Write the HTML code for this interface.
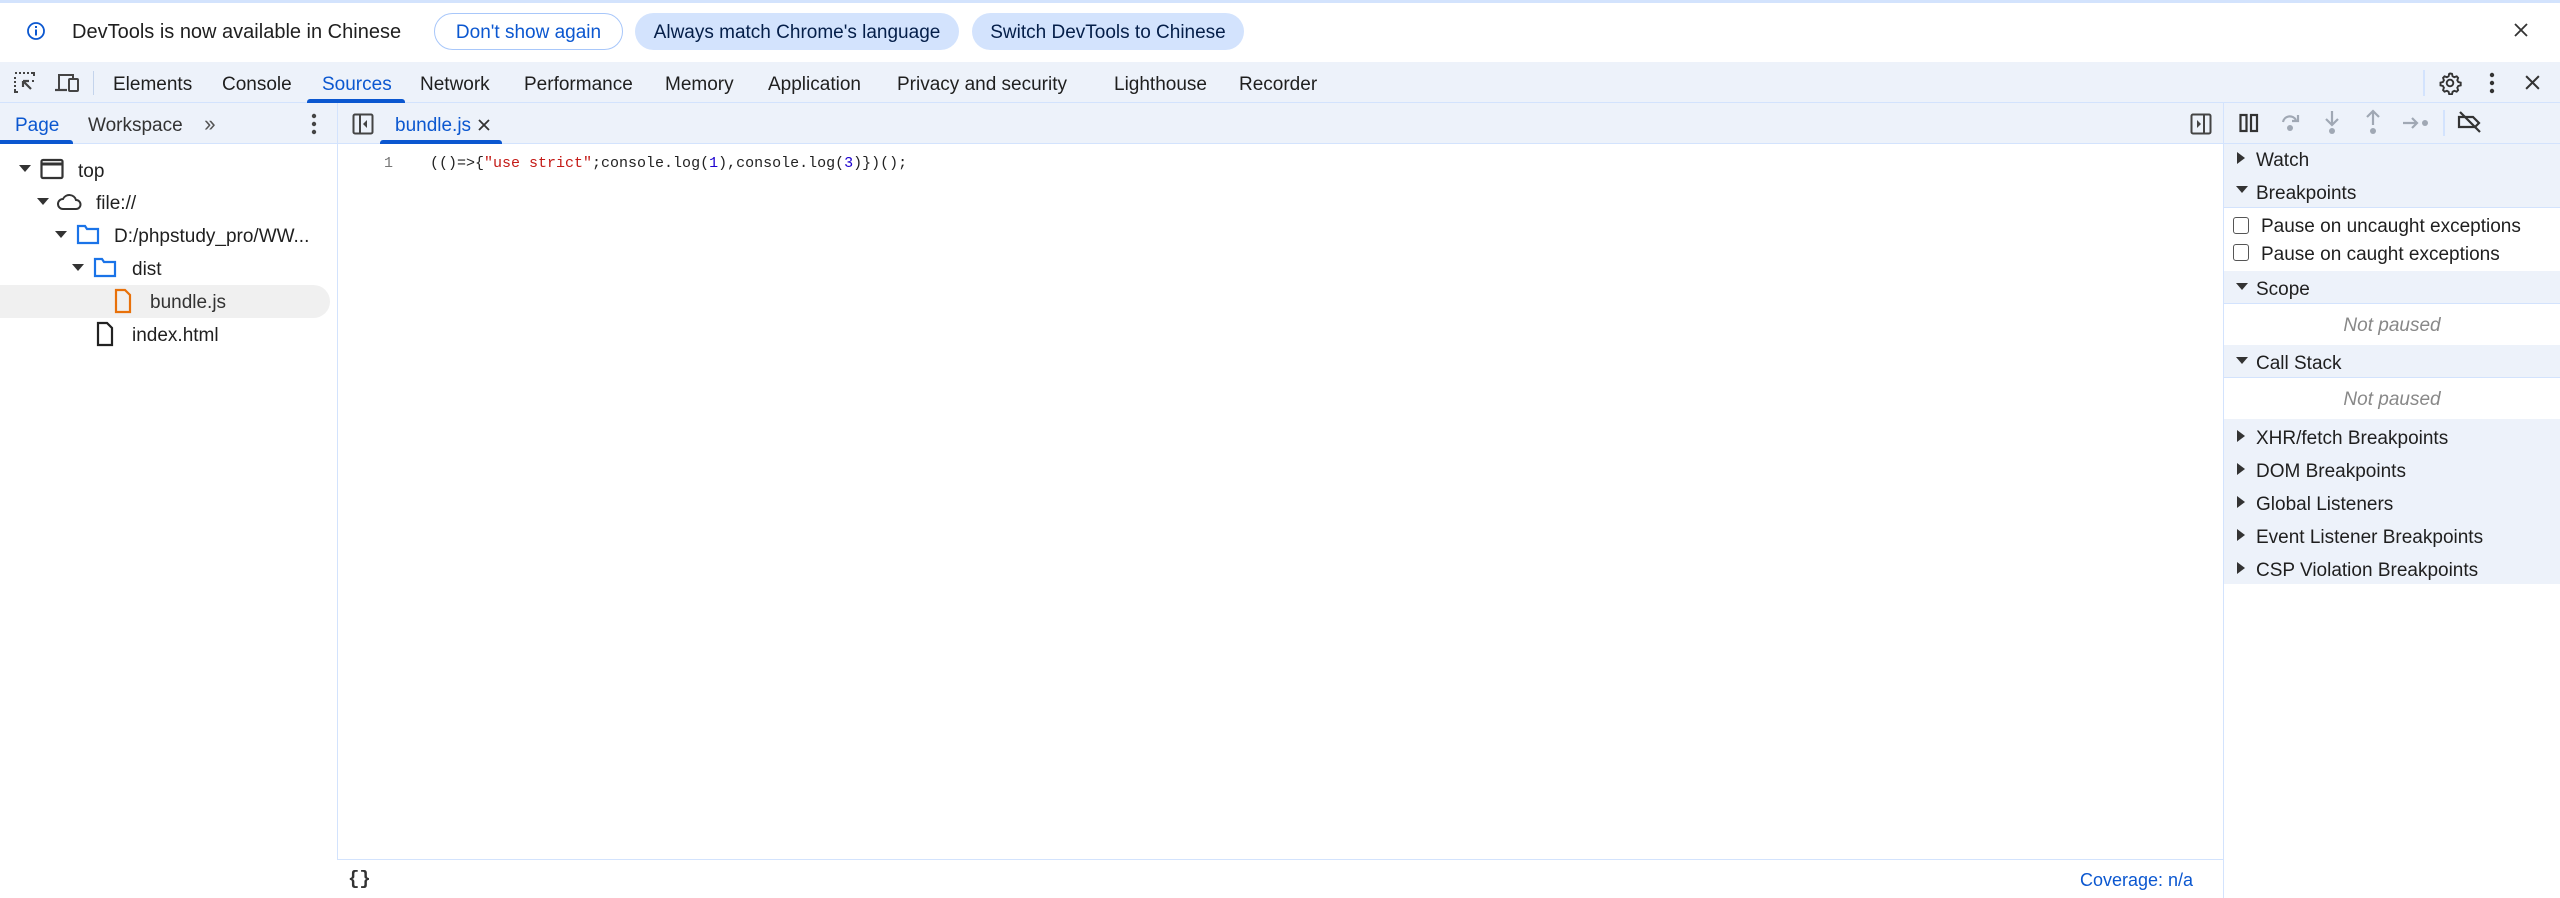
<!DOCTYPE html>
<html><head><meta charset="utf-8"><style>
*{box-sizing:border-box;margin:0;padding:0}
body{width:2560px;height:898px;overflow:hidden;background:#fff;font-family:"Liberation Sans",Arial,sans-serif;color:#1f1f1f;position:relative;font-size:19px}
.a{position:absolute;white-space:nowrap}
.t{margin-top:3px}
.tb{background:#edf2fa}
.blue{color:#0b57d0}
svg{position:absolute}
</style></head><body>
<!-- infobar -->
<div class="a" style="left:0;top:0;width:2560px;height:3px;background:#d3e3fd"></div>
<svg style="left:26px;top:21px" width="20" height="20" viewBox="0 0 20 20"><circle cx="10" cy="10" r="8" fill="none" stroke="#0b57d0" stroke-width="1.8"/><rect x="9" y="8.5" width="2" height="6" fill="#0b57d0"/><rect x="9" y="5" width="2" height="2" fill="#0b57d0"/></svg>
<div class="a" style="left:72px;top:21px;font-size:20px">DevTools is now available in Chinese</div>
<div class="a" style="left:434px;top:13px;width:189px;height:37px;border:1.5px solid #a8c7fa;border-radius:19px;color:#0b57d0;text-align:center;line-height:37px;font-size:19px">Don't show again</div>
<div class="a" style="left:635px;top:13px;width:324px;height:37px;background:#d3e3fd;border-radius:19px;text-align:center;line-height:40px;font-size:19px;color:#041e49">Always match Chrome's language</div>
<div class="a" style="left:972px;top:13px;width:272px;height:37px;background:#d3e3fd;border-radius:19px;text-align:center;line-height:40px;font-size:19px;color:#041e49">Switch DevTools to Chinese</div>
<svg style="left:2513px;top:22px" width="16" height="16" viewBox="0 0 16 16"><path d="M2 2L14 14M14 2L2 14" stroke="#333" stroke-width="1.8"/></svg>

<!-- main tab bar -->
<div class="a tb" style="left:0;top:62px;width:2560px;height:41px;border-bottom:1px solid #d3e3fd"></div>
<svg style="left:14px;top:72px" width="22" height="22" viewBox="0 0 22 22"><path d="M1 1h2M5 1h2M9 1h2M13 1h2M17 1h3v3M1 5v2M1 9v2M1 13v2M1 17v3h3M19 8v2" stroke="#444" stroke-width="2" fill="none"/><path d="M9 9L17 17M9 9h6M9 9v6" stroke="#444" stroke-width="2.2" fill="none"/></svg>
<svg style="left:54px;top:72px" width="26" height="22" viewBox="0 0 26 22"><path d="M5 17V3h14v3" stroke="#444" stroke-width="2" fill="none"/><path d="M1 18h12" stroke="#444" stroke-width="2.2"/><rect x="15" y="7" width="9" height="12" rx="1" fill="none" stroke="#444" stroke-width="2"/></svg>
<div class="a" style="left:93px;top:71px;width:1px;height:24px;background:#c4d4ec"></div>
<div class="a" style="top:74px;left:113px">Elements</div>
<div class="a" style="top:74px;left:222px">Console</div>
<div class="a blue" style="top:74px;left:322px">Sources</div>
<div class="a" style="left:307px;top:99px;width:98px;height:4px;background:#0b57d0;border-radius:3px 3px 0 0"></div>
<div class="a" style="top:74px;left:420px">Network</div>
<div class="a" style="top:74px;left:524px">Performance</div>
<div class="a" style="top:74px;left:665px">Memory</div>
<div class="a" style="top:74px;left:768px">Application</div>
<div class="a" style="top:74px;left:897px">Privacy and security</div>
<div class="a" style="top:74px;left:1114px">Lighthouse</div>
<div class="a" style="top:74px;left:1239px">Recorder</div>
<div class="a" style="left:2423px;top:70px;width:2px;height:26px;background:#d3e3fd"></div>
<svg style="left:2438px;top:71px" width="24" height="24" viewBox="0 0 24 24"><path d="M12 2.5l2 .3.6 2.4 1.7 1 2.4-.8 1.4 1.5-.8 2.4 1 1.7 2.4.6v2.8l-2.4.6-1 1.7.8 2.4-1.4 1.5-2.4-.8-1.700 1-.6 2.4h-2.8l-.6-2.4-1.7-1-2.4.8-1.4-1.5.8-2.4-1-1.7-2.4-.6v-2.8l2.4-.6 1-1.7-.8-2.4 1.4-1.5 2.4.8 1.7-1 .6-2.4z" fill="none" stroke="#333" stroke-width="1.9"/><circle cx="12" cy="12" r="3.3" fill="none" stroke="#333" stroke-width="1.9"/></svg>
<svg style="left:2489px;top:72px" width="6" height="22" viewBox="0 0 6 22"><circle cx="3" cy="3" r="2.2" fill="#333"/><circle cx="3" cy="11" r="2.2" fill="#333"/><circle cx="3" cy="19" r="2.2" fill="#333"/></svg>
<svg style="left:2524px;top:74px" width="17" height="17" viewBox="0 0 16 16"><path d="M2 2L14 14M14 2L2 14" stroke="#333" stroke-width="1.9"/></svg>

<!-- sub toolbar -->
<div class="a tb" style="left:0;top:103px;width:2560px;height:41px;border-bottom:1px solid #d3e3fd"></div>
<div class="a blue" style="left:15px;top:115px">Page</div>
<div class="a" style="left:0;top:140px;width:73px;height:4px;background:#0b57d0;border-radius:0 3px 0 0"></div>
<div class="a" style="left:88px;top:115px;color:#333">Workspace</div>
<div class="a" style="left:204px;top:111px;color:#555;font-size:22px;letter-spacing:-3px">››</div>
<svg style="left:311px;top:113px" width="6" height="22" viewBox="0 0 6 22"><circle cx="3" cy="3" r="2.2" fill="#444"/><circle cx="3" cy="11" r="2.2" fill="#444"/><circle cx="3" cy="19" r="2.2" fill="#444"/></svg>
<div class="a" style="left:337px;top:103px;width:1px;height:757px;background:#d3e3fd"></div>
<svg style="left:352px;top:113px" width="22" height="22" viewBox="0 0 22 22"><rect x="1.5" y="1.5" width="19" height="19" rx="1.5" fill="none" stroke="#444" stroke-width="2"/><path d="M8 2v18" stroke="#444" stroke-width="2"/><path d="M15 7l-4 4 4 4z" fill="#444"/></svg>
<div class="a blue" style="left:395px;top:115px">bundle.js</div>
<svg style="left:477px;top:118px" width="14" height="14" viewBox="0 0 14 14"><path d="M2 2L12 12M12 2L2 12" stroke="#333" stroke-width="1.8"/></svg>
<div class="a" style="left:380px;top:140px;width:122px;height:4px;background:#0b57d0;border-radius:3px 3px 0 0"></div>
<svg style="left:2190px;top:113px" width="22" height="22" viewBox="0 0 22 22"><rect x="1.5" y="1.5" width="19" height="19" rx="1.5" fill="none" stroke="#444" stroke-width="2"/><path d="M14 2v18" stroke="#444" stroke-width="2"/><path d="M7 7l4 4-4 4z" fill="#444"/></svg>
<div class="a" style="left:2223px;top:103px;width:1px;height:795px;background:#d3e3fd"></div>
<svg style="left:2239px;top:113px" width="20" height="20" viewBox="0 0 20 20"><rect x="1.5" y="2" width="6" height="16" fill="none" stroke="#333" stroke-width="2.2"/><rect x="12" y="2" width="6" height="16" fill="none" stroke="#333" stroke-width="2.2"/></svg>
<svg style="left:2280px;top:111px" width="22" height="24" viewBox="0 0 22 24"><path d="M3 11a7 7 0 0 1 13-2" fill="none" stroke="#a0a8b4" stroke-width="2.2"/><path d="M18 4v6h-6" fill="none" stroke="#a0a8b4" stroke-width="2.2"/><circle cx="10" cy="17" r="3" fill="#a0a8b4"/></svg>
<svg style="left:2322px;top:109px" width="20" height="28" viewBox="0 0 20 28"><path d="M10 2v14M4 10l6 6 6-6" fill="none" stroke="#a0a8b4" stroke-width="2.2"/><circle cx="10" cy="22" r="3" fill="#a0a8b4"/></svg>
<svg style="left:2363px;top:109px" width="20" height="28" viewBox="0 0 20 28"><path d="M10 16V2M4 8l6-6 6 6" fill="none" stroke="#a0a8b4" stroke-width="2.2"/><circle cx="10" cy="22" r="3" fill="#a0a8b4"/></svg>
<svg style="left:2402px;top:114px" width="28" height="18" viewBox="0 0 28 18"><path d="M1 9h14M10 4l5 5-5 5" fill="none" stroke="#a0a8b4" stroke-width="2.2"/><circle cx="23" cy="9" r="3" fill="#a0a8b4"/></svg>
<div class="a" style="left:2443px;top:110px;width:2px;height:26px;background:#d3e3fd"></div>
<svg style="left:2457px;top:111px" width="26" height="22" viewBox="0 0 26 22"><path d="M2 6h14l6 6-4 4H2z" fill="none" stroke="#333" stroke-width="2.2"/><path d="M3 1l20 20" stroke="#333" stroke-width="2.2"/></svg>

<!-- file tree -->
<div class="a" style="left:0;top:285px;width:330px;height:33px;background:#f0f0f0;border-radius:0 17px 17px 0"></div>
<svg style="left:19px;top:165px" width="12" height="8"><path d="M0 0h12L6 7z" fill="#333"/></svg>
<svg style="left:40px;top:158px" width="24" height="22" viewBox="0 0 24 22"><rect x="1.5" y="2" width="21" height="18" rx="1.5" fill="none" stroke="#333" stroke-width="2.2"/><path d="M2 6h20" stroke="#333" stroke-width="3"/></svg>
<div class="a" style="left:78px;top:161px">top</div>
<svg style="left:37px;top:198px" width="12" height="8"><path d="M0 0h12L6 7z" fill="#333"/></svg>
<svg style="left:57px;top:190px" width="26" height="22" viewBox="0 0 26 22"><path d="M6 19a5 5 0 0 1 0-10a7 7 0 0 1 13 1a4.5 4.5 0 0 1 0 9z" fill="none" stroke="#333" stroke-width="2"/></svg>
<div class="a" style="left:96px;top:193px">file://</div>
<svg style="left:55px;top:231px" width="12" height="8"><path d="M0 0h12L6 7z" fill="#333"/></svg>
<svg style="left:76px;top:223px" width="24" height="22" viewBox="0 0 24 22"><path d="M2 3h7l2 3h11v14H2z" fill="none" stroke="#1a73e8" stroke-width="2.2"/></svg>
<div class="a" style="left:114px;top:226px">D:/phpstudy_pro/WW...</div>
<svg style="left:72px;top:264px" width="12" height="8"><path d="M0 0h12L6 7z" fill="#333"/></svg>
<svg style="left:93px;top:256px" width="24" height="22" viewBox="0 0 24 22"><path d="M2 3h7l2 3h11v14H2z" fill="none" stroke="#1a73e8" stroke-width="2.2"/></svg>
<div class="a" style="left:132px;top:259px">dist</div>
<svg style="left:114px;top:288px" width="18" height="26" viewBox="0 0 18 26"><path d="M2 2h9l5 5v17H2z" fill="none" stroke="#e8710a" stroke-width="2.2"/></svg>
<div class="a" style="left:150px;top:292px;color:#333">bundle.js</div>
<svg style="left:96px;top:321px" width="18" height="26" viewBox="0 0 18 26"><path d="M2 2h9l5 5v17H2z" fill="none" stroke="#222" stroke-width="2.2"/></svg>
<div class="a" style="left:132px;top:325px">index.html</div>

<!-- code -->
<div class="a" style="left:384px;top:155px;font-family:'Liberation Mono',monospace;font-size:15px;color:#777">1</div>
<div class="a" style="left:430px;top:155px;font-family:'Liberation Mono',monospace;font-size:15px;color:#222">(()=&gt;{<span style="color:#c41a16">"use strict"</span>;console.log(<span style="color:#1c00cf">1</span>),console.log(<span style="color:#1c00cf">3</span>)})();</div>

<!-- bottom status -->
<div class="a" style="left:338px;top:859px;width:1885px;height:1px;background:#d3e3fd"></div>
<div class="a" style="left:348px;top:868px;font-family:'Liberation Mono',monospace;font-size:19px;font-weight:bold;color:#333">{}</div>
<div class="a blue" style="left:2080px;top:870px;font-size:18px">Coverage: n/a</div>

<!-- right sidebar -->
<div class="a tb" style="left:2224px;top:144px;width:336px;height:64px;border-bottom:1px solid #d3e3fd"></div>
<div class="a tb" style="left:2224px;top:271px;width:336px;height:33px;border-bottom:1px solid #d3e3fd"></div>
<div class="a tb" style="left:2224px;top:345px;width:336px;height:33px;border-bottom:1px solid #d3e3fd"></div>
<div class="a tb" style="left:2224px;top:419px;width:336px;height:165px"></div>
<svg style="left:2237px;top:152px" width="9" height="12"><path d="M0 0v12l8-6z" fill="#333"/></svg>
<div class="a" style="left:2256px;top:150px">Watch</div>
<svg style="left:2236px;top:186px" width="12" height="8"><path d="M0 0h12L6 7z" fill="#333"/></svg>
<div class="a" style="left:2256px;top:183px">Breakpoints</div>
<div class="a" style="left:2233px;top:217px;width:16px;height:17px;border:1.5px solid #555;border-radius:3px"></div>
<div class="a" style="left:2261px;top:216px">Pause on uncaught exceptions</div>
<div class="a" style="left:2233px;top:244px;width:16px;height:17px;border:1.5px solid #555;border-radius:3px"></div>
<div class="a" style="left:2261px;top:244px">Pause on caught exceptions</div>
<svg style="left:2236px;top:283px" width="12" height="8"><path d="M0 0h12L6 7z" fill="#333"/></svg>
<div class="a" style="left:2256px;top:279px">Scope</div>
<div class="a" style="left:2224px;width:336px;text-align:center;top:315px;font-style:italic;color:#888">Not paused</div>
<svg style="left:2236px;top:357px" width="12" height="8"><path d="M0 0h12L6 7z" fill="#333"/></svg>
<div class="a" style="left:2256px;top:353px">Call Stack</div>
<div class="a" style="left:2224px;width:336px;text-align:center;top:389px;font-style:italic;color:#888">Not paused</div>
<svg style="left:2237px;top:430px" width="9" height="12"><path d="M0 0v12l8-6z" fill="#333"/></svg>
<div class="a" style="left:2256px;top:428px">XHR/fetch Breakpoints</div>
<svg style="left:2237px;top:463px" width="9" height="12"><path d="M0 0v12l8-6z" fill="#333"/></svg>
<div class="a" style="left:2256px;top:461px">DOM Breakpoints</div>
<svg style="left:2237px;top:496px" width="9" height="12"><path d="M0 0v12l8-6z" fill="#333"/></svg>
<div class="a" style="left:2256px;top:494px">Global Listeners</div>
<svg style="left:2237px;top:529px" width="9" height="12"><path d="M0 0v12l8-6z" fill="#333"/></svg>
<div class="a" style="left:2256px;top:527px">Event Listener Breakpoints</div>
<svg style="left:2237px;top:562px" width="9" height="12"><path d="M0 0v12l8-6z" fill="#333"/></svg>
<div class="a" style="left:2256px;top:560px">CSP Violation Breakpoints</div>
</body></html>
